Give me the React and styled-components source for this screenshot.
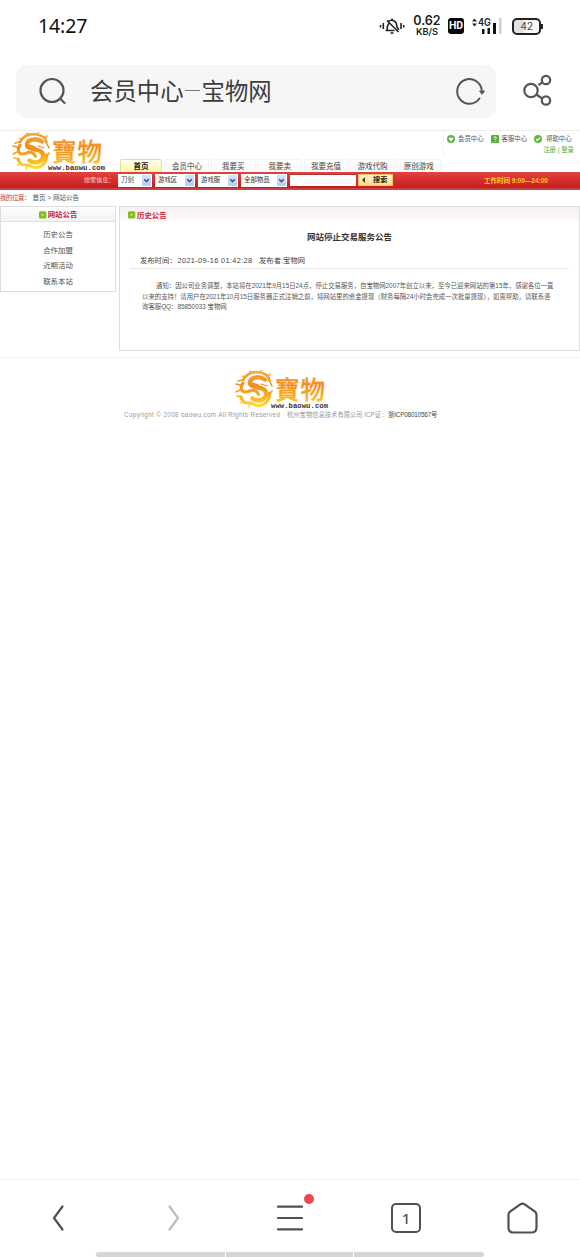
import React from 'react';
import styled, { createGlobalStyle } from 'styled-components';

const Global = createGlobalStyle`
  * { box-sizing: border-box; }
  html, body { margin: 0; background: #fff; }
  body { font-family: "Liberation Sans", "Noto Sans CJK SC", sans-serif; color: #444; }
  ul { list-style: none; margin: 0; padding: 0; }
  h1, h2, p { margin: 0; }
  svg { display: block; flex: none; overflow: visible; }
`;

const Screen = styled.div`
  width: 580px;
  height: 1257px;
  display: flex;
  flex-direction: column;
  overflow: hidden;
  background: #fff;
`;

/* ---------- phone status bar ---------- */
const StatusBar = styled.header`
  height: 65px;
  flex: none;
  display: flex;
  align-items: flex-start;
  padding: 14px 39px 0 38px;
`;
const Clock = styled.time`
  font: 19.5px/24px "Noto Sans", sans-serif;
  letter-spacing: -0.1px;
  color: #111;
  flex: 1;
`;
const BellIcon = styled.svg`
  margin-top: 3px;
`;
const SignalIcon = styled.svg`
  margin-top: 3px;
`;
const Speed = styled.div`
  width: 28px;
  margin: 1px 7px 0 8px;
  text-align: center;
  font-family: Inter, sans-serif;
  font-weight: 600;
  font-size: 12.5px;
  line-height: 12px;
  color: #222;
  small { display: block; font-size: 9.3px; line-height: 9px; letter-spacing: -0.1px; }
`;
const HdBadge = styled.div`
  width: 16px;
  height: 16px;
  margin: 4px 8px 0 0;
  border-radius: 3px;
  background: #050505;
  color: #fff;
  font: 700 10.5px/16px Roboto, sans-serif;
  text-align: center;
`;
const Battery = styled.div`
  position: relative;
  width: 29px;
  height: 17px;
  margin: 4px 0 0 10px;
  border: 2px solid #222;
  border-radius: 5px;
  background: linear-gradient(90deg, #e2e2e2 42%, #fafafa 42%);
  font: 10.5px/13px Inter, sans-serif;
  letter-spacing: -0.3px;
  text-align: center;
  color: #444;
  &::after {
    content: "";
    position: absolute;
    right: -4px;
    top: 4px;
    width: 2px;
    height: 5px;
    background: #222;
  }
`;

/* ---------- address bar ---------- */
const AddressRow = styled.div`
  height: 65px;
  flex: none;
  display: flex;
  align-items: flex-start;
  padding-left: 16px;
`;
const AddressBox = styled.div`
  width: 480px;
  height: 53px;
  border-radius: 10px;
  background: #f6f6f6;
  display: flex;
  align-items: center;
  padding: 0 11px 0 23px;
`;
const AddressTitle = styled.h1`
  flex: 1;
  margin: -3px 0 0 22px;
  display: flex;
  align-items: center;
  font: 400 23.4px/50px "Noto Sans CJK SC", sans-serif;
  color: #3d3d3d;
  i { width: 15px; height: 1px; margin: 1px 2px 0 1px; background: #777; }
`;
const ShareButton = styled.div`
  margin: 10px 0 0 27px;
`;

/* ---------- web page ---------- */
const Page = styled.main`
  flex: 1;
  min-height: 0;
`;
const SiteHeader = styled.div`
  height: 42px;
  border-top: 1px solid #eee;
  display: flex;
`;
const LogoSlot = styled.div`
  width: 119px;
  padding: 1px 0 0 11px;
`;
const HeaderMain = styled.div`
  flex: 1;
  display: flex;
  flex-direction: column;
  justify-content: space-between;
`;
const Account = styled.div`
  align-self: flex-end;
  width: 137px;
  padding: 3px 0 0 3px;
  border-left: 1px solid #f4f4f4;
`;
const QuickLinks = styled.div`
  display: flex;
  height: 10px;
  align-items: center;
`;
const QuickLink = styled.span`
  display: flex;
  align-items: center;
  gap: ${p => p.$gap}px;
  width: ${p => p.$w}px;
  font-size: 6.4px;
  line-height: 10px;
  white-space: nowrap;
  color: #555;
`;
const Login = styled.div`
  padding-right: 6px;
  text-align: right;
  font-size: 6.4px;
  line-height: 12px;
  color: #55ad32;
`;
const Tabs = styled.nav`
  display: flex;
  align-items: flex-end;
  gap: 1.4px;
  padding-left: 1px;
`;
const Tab = styled.span`
  width: ${p => (p.$active ? 42 : 45)}px;
  height: ${p => (p.$active ? 13 : 13)}px;
  margin-right: ${p => (p.$active ? 1 : 0)}px;
  border: 1px solid ${p => (p.$active ? '#dfdf96' : '#f3f3f3')};
  border-bottom: 0;
  border-radius: 2px 2px 0 0;
  background: ${p => (p.$active ? 'linear-gradient(#fffff0, #fff7a4)' : 'linear-gradient(#fff, #f8f8f8)')};
  font-size: 7.5px;
  line-height: 13px;
  font-weight: ${p => (p.$active ? 700 : 400)};
  color: ${p => (p.$active ? '#222' : '#444')};
  text-align: center;
  white-space: nowrap;
`;
const SearchBar = styled.div`
  height: 18px;
  display: flex;
  align-items: flex-start;
  padding-top: 2px;
  border-bottom: 2px solid #c44545;
  background: linear-gradient(#e34343, #c91b1b);
`;
const SearchLabel = styled.span`
  width: 118px;
  padding-left: 84px;
  font-size: 6.1px;
  line-height: 12px;
  color: #ffd2c8;
  white-space: nowrap;
`;
const Select = styled.span`
  width: ${p => p.$w}px;
  height: 13px;
  margin-right: 3px;
  padding: 1px 1px 1px 3px;
  display: flex;
  justify-content: space-between;
  background: #fff;
  font-size: 6.4px;
  line-height: 10px;
  color: #333;
  white-space: nowrap;
  svg { background: linear-gradient(#d5e4fd, #b5cef5); }
`;
const Input = styled.span`
  width: 66px;
  height: 12px;
  background: #fff;
  border-top: 1px solid #a33;
`;
const SearchButton = styled.span`
  width: 35px;
  height: 12px;
  margin-left: 2px;
  display: flex;
  align-items: center;
  gap: 8px;
  padding-left: 3px;
  border: 1px solid #f4c46a;
  background: linear-gradient(#fff7d2, #ffdc83);
  font-size: 7.2px;
  line-height: 10px;
  font-weight: 700;
  color: #331d0d;
  white-space: nowrap;
`;
const Hours = styled.span`
  margin-left: 91px;
  font: 700 6.5px/14px "Liberation Sans", "Noto Sans CJK SC", sans-serif;
  color: #ffd21f;
  white-space: nowrap;
`;
const Breadcrumb = styled.div`
  height: 16px;
  font-size: 6.5px;
  line-height: 16px;
  color: #555;
  white-space: pre;
  em { font-style: normal; color: #c43b3b; display: inline-block; width: 32.5px; letter-spacing: -0.5px; }
`;
const Columns = styled.div`
  display: flex;
  align-items: flex-start;
  gap: 3px;
`;
const Sidebar = styled.aside`
  width: 116px;
  height: 86px;
  border: 1px solid #ddd;
`;
const PanelHead = styled.h2`
  height: 15px;
  display: flex;
  align-items: center;
  justify-content: ${p => (p.$centered ? 'center' : 'flex-start')};
  gap: 2px;
  padding-left: ${p => (p.$centered ? 0 : 8)}px;
  padding-top: 2px;
  border-bottom: ${p => (p.$centered ? '1px solid #e4e4c9' : '0')};
  background: ${p => (p.$centered ? 'linear-gradient(#fff, #f2f2f7)' : 'linear-gradient(#f5eff1, #fffcfc)')};
  font-size: 7.4px;
  line-height: 12px;
  color: #d12335;
`;
const SideList = styled.ul`
  padding-top: 5px;
  li { height: 15.6px; font-size: 7.4px; line-height: 15.6px; text-align: center; color: #505050; }
`;
const Article = styled.section`
  width: 461px;
  height: 145px;
  border: 1px solid #ddd;
`;
const ArticleTitle = styled.h2`
  margin-top: 9px;
  text-align: center;
  font-size: 8.5px;
  line-height: 12px;
  color: #333;
`;
const Meta = styled.p`
  height: 15px;
  margin: 11px 10px 0;
  padding-left: 10px;
  display: flex;
  border-bottom: 1px solid #e8e8e8;
  font-size: 7.3px;
  line-height: 13px;
  color: #444;
  white-space: nowrap;
`;
const MetaPart = styled.span`
  width: ${p => p.$w}px;
  letter-spacing: ${p => p.$track || 0}px;
`;
const Body = styled.div`
  padding: 12px 0 0 22px;
`;
const Line = styled.p`
  padding-left: ${p => p.$indent || 0}px;
  font-size: 6.38px;
  line-height: 10.6px;
  color: #555;
  white-space: nowrap;
`;
const Footer = styled.footer`
  margin-top: 6px;
  border-top: 1px solid #f1f1f1;
  padding-top: 12px;
`;
const FooterLogo = styled.div`
  padding-left: 234px;
`;
const Copyright = styled.p`
  display: flex;
  padding: 0 0 0 124px;
  font-size: 6.3px;
  line-height: 12px;
  white-space: nowrap;
`;
const CopyPart = styled.span`
  width: ${p => p.$w}px;
  letter-spacing: ${p => p.$track || 0}px;
  color: ${p => (p.$dark ? '#444' : '#999')};
`;

/* ---------- browser toolbar ---------- */
const Toolbar = styled.nav`
  height: 73px;
  flex: none;
  border-top: 1px solid #f1f1f1;
  display: grid;
  grid-template-columns: repeat(5, 116px);
`;
const ToolItem = styled.span`
  position: relative;
  height: 76px;
  display: flex;
  align-items: center;
  justify-content: center;
`;
const Dot = styled.i`
  position: absolute;
  left: 72px;
  top: 14px;
  width: 10px;
  height: 10px;
  border-radius: 50%;
  background: #ed4850;
`;
const TabCount = styled.span`
  width: 30px;
  height: 30px;
  border: 2px solid #505050;
  border-radius: 5px;
  text-align: center;
  font: 500 15px/26px "Noto Sans", sans-serif;
  color: #505050;
`;
const HomeIndicator = styled.div`
  height: 5px;
  flex: none;
  margin: 0 96px;
  display: grid;
  grid-template-columns: 129px 127px 130px;
  gap: 1px;
  i { background: #d5d5d5; }
  i:first-child { border-radius: 3px 0 0 3px; }
  i:last-child { border-radius: 0 3px 3px 0; }
`;

function Logo({ id }) {
  const fill = `url(#${id})`;
  return (
    <svg width="95" height="39" viewBox="0 0 95 39">
      <defs>
        <linearGradient id={id} x1="0" y1="0" x2="0" y2="39" gradientUnits="userSpaceOnUse">
          <stop offset="0" stopColor="#f3ae42" />
          <stop offset="0.4" stopColor="#f28d1b" />
          <stop offset="0.75" stopColor="#fbbb20" />
          <stop offset="1" stopColor="#ffe84a" />
        </linearGradient>
      </defs>
      <g fill="none" stroke={fill} strokeLinecap="round" strokeLinejoin="round">
        <path strokeWidth="2.600" d="M9 10C13 3 20 1.500 26 2.500c6 1 9 4 9.500 8" />
        <path strokeWidth="4.400" d="M31 9.500C25 5.500 16 7.500 16 12.500c0 5 7 4 12 6 5.500 2 5.500 8.500.5 11-3.500 1.700-8 1-10-1" />
        <path strokeWidth="3" d="M9 13c-3 4-2 8.500 2 9 4 .3 5-2.500 9-1.500 3 .8 4 2.500 4.500 4" />
        <path strokeWidth="3" d="M7 27c1 4 4 6.500 8 6 4-.5 6 3.500 11 2.500 6-1 10-6 9.500-12.500" />
        <path strokeWidth="1.600" d="M9 10l-5 1M6 15l-4-1M6 20l-4 2M8 27l-5-1M10 31l-3 2M16 34l-1 3M34 6l2-2M36 12l2 4M36 24l2-3M18 13l6 2" />
        <path strokeWidth="1.200" d="M15 4l1-3 3 1M25 2l3-1.500M12 7l-4-1M27 14l6 2" />
      </g>
      <text x="41" y="28.500" fontFamily='"Noto Sans CJK TC", sans-serif' fontWeight="500" fontSize="24.500" textLength="50" fill={fill} stroke={fill} strokeWidth="0.300">寶物</text>
      <text x="37" y="37.600" fontFamily='"Liberation Mono", monospace' fontWeight="700" fontSize="7.200" textLength="57" fill="#3d3022">www.baowu.com</text>
    </svg>
  );
}

function GreenMark({ shape }) {
  return (
    <svg width="8" height="8" viewBox="0 0 8 8">
      {shape === 'help' ? <rect width="8" height="8" rx="1" fill="#5cae3c" /> : <circle cx="4" cy="4" r="4" fill="#62b445" />}
      {shape === 'heart' && <path d="M4 6.400L1.800 4C1.300 2.800 3 1.800 4 3c1-1.200 2.700-.2 2.200 1z" fill="#fff" />}
      {shape === 'help' && <path d="M2.700 2.800C3 1.400 5.500 1.600 5.300 3 5.200 3.800 4 3.800 4 5M4 6v.8" fill="none" stroke="#fff" strokeWidth="1" />}
      {shape === 'check' && <path d="M2 4l1.500 1.500L6.200 2.700" fill="none" stroke="#fff" strokeWidth="1.200" />}
    </svg>
  );
}

const Bullet = () => (
  <svg width="7" height="7" viewBox="0 0 7 7">
    <rect y="-0.700" width="7.300" height="7.300" rx="1.300" fill="#7fc21c" />
    <path d="M2 2.200h3L3.500 4.200z" fill="#d3ec85" />
  </svg>
);

const DropArrow = () => (
  <svg width="9" height="11" viewBox="0 0 9 11">
    <path d="M2.200 4.300l2.300 2.300 2.300-2.300" fill="none" stroke="#3f5a88" strokeWidth="1.500" />
  </svg>
);

const tabs = ['首页', '会员中心', '我要买', '我要卖', '我要充值', '游戏代购', '原创游戏'];
const selects = [['刀剑', 34], ['游戏区', 40], ['游戏服', 40], ['全部物品', 46]];
const sideLinks = ['历史公告', '合作加盟', '近期活动', '联系本站'];

export default function App() {
  return (
    <Screen>
      <Global />
      <StatusBar>
        <Clock>14:27</Clock>
        <BellIcon width="26" height="18" viewBox="0 0 26 18" fill="none" stroke="#222" strokeWidth="1.600">
          <path d="M6.500 13.500h9M8.300 13V9.500L10 6M9.500 4.300C11 3.300 13.500 3 15.500 4.200c2 1.300 2.300 3 2.300 5.300l2 3.500M13 1.500v2M11.500 16h3M8 3.500l11.500 11.500" />
          <path d="M4.300 6v6M1.500 8v2.500M22 6v6M24.700 8v2.500" />
        </BellIcon>
        <Speed>0.62<small>KB/S</small></Speed>
        <HdBadge>HD</HdBadge>
        <SignalIcon width="30" height="18" viewBox="0 0 30 18">
          <path d="M0 4.500l2.500-3L5 4.500zM0 6.500l2.500 3L5 6.500z" fill="#222" />
          <text x="6" y="9" fontFamily="Inter, sans-serif" fontWeight="600" fontSize="10" textLength="13" lengthAdjust="spacingAndGlyphs" fill="#222">4G</text>
          <path d="M10 12h2.500v5H10zM15.500 11H18v6h-2.500zM21 6h3v11h-3z" fill="#111" />
          <path d="M27 1h2.500v16H27z" fill="#d0d0d0" />
        </SignalIcon>
        <Battery>42</Battery>
      </StatusBar>

      <AddressRow>
        <AddressBox>
          <svg width="29" height="28" viewBox="0 0 29 28" fill="none" stroke="#555" strokeWidth="2.200" strokeLinecap="round">
            <circle cx="13" cy="12.500" r="11.500" /><path d="M21.500 21l4 4" />
          </svg>
          <AddressTitle>会员中心<i />宝物网</AddressTitle>
          <svg width="30" height="28" viewBox="0 0 30 28" fill="none" stroke="#555" strokeWidth="2" strokeLinecap="round">
            <path d="M24.500 20.500A12.300 12.300 0 1 1 26.700 12" />
            <path d="M25 13h4.500L27.200 16z" fill="#555" strokeWidth="1" />
          </svg>
        </AddressBox>
        <ShareButton>
          <svg width="30" height="32" viewBox="0 0 30 32" fill="none" stroke="#555" strokeWidth="2.200">
            <circle cx="8" cy="15.500" r="6.700" /><circle cx="23" cy="5" r="4.200" /><circle cx="23" cy="25.500" r="4.200" />
            <path d="M15.500 10l4-2.700M13.300 19.500l6 4" />
          </svg>
        </ShareButton>
      </AddressRow>

      <Page>
        <SiteHeader>
          <LogoSlot><Logo id="headerGold" /></LogoSlot>
          <HeaderMain>
            <Account>
              <QuickLinks>
                <QuickLink $w={43.500} $gap={3}><GreenMark shape="heart" />会员中心</QuickLink>
                <QuickLink $w={43} $gap={3}><GreenMark shape="help" />客服中心</QuickLink>
                <QuickLink $w={40} $gap={4.500}><GreenMark shape="check" />帮助中心</QuickLink>
              </QuickLinks>
              <Login>注册 | 登录</Login>
            </Account>
            <Tabs>{tabs.map((t, i) => <Tab key={t} $active={i === 0}>{t}</Tab>)}</Tabs>
          </HeaderMain>
        </SiteHeader>

        <SearchBar>
          <SearchLabel>搜索信息：</SearchLabel>
          {selects.map(([t, w]) => <Select key={t} $w={w}>{t}<DropArrow /></Select>)}
          <Input />
          <SearchButton>
            <svg width="3" height="6" viewBox="0 0 3 6"><path d="M3 0v6L0 3z" fill="#58340c" /></svg>
            搜索
          </SearchButton>
          <Hours>工作时间 9:00—24:00</Hours>
        </SearchBar>

        <Breadcrumb><em>我的位置：</em>首页 &gt; 网站公告</Breadcrumb>

        <Columns>
          <Sidebar>
            <PanelHead $centered><Bullet />网站公告</PanelHead>
            <SideList>{sideLinks.map(t => <li key={t}>{t}</li>)}</SideList>
          </Sidebar>
          <Article>
            <PanelHead><Bullet />历史公告</PanelHead>
            <ArticleTitle>网站停止交易服务公告</ArticleTitle>
            <Meta>
              <MetaPart $w={37.500}>发布时间：</MetaPart>
              <MetaPart $w={81.500} $track={0.380}>2021-09-16 01:42:28</MetaPart>
              <MetaPart $w={50} $track={0.040}>发布者:宝物网</MetaPart>
            </Meta>
            <Body>
              <Line $indent={14}>通知：因公司业务调整，本站将在2021年9月15日24点，停止交易服务，自宝物网2007年创立以来，至今已迎来网站的第15年，感谢各位一直</Line>
              <Line>以来的支持！请用户在2021年10月15日服务器正式注销之前，将网站里的资金提现（财务每隔24小时会完成一次批量提现），如需帮助，请联系咨</Line>
              <Line>询客服QQ：85850033 宝物网</Line>
            </Body>
          </Article>
        </Columns>

        <Footer>
          <FooterLogo><Logo id="footerGold" /></FooterLogo>
          <Copyright>
            <CopyPart $w={163} $track={0.360}>Copyright © 2008 baowu.com All Rights Reserved</CopyPart>
            <CopyPart $w={101}>杭州宝物信息技术有限公司 ICP证：</CopyPart>
            <CopyPart $w={50} $track={-0.150} $dark>浙ICP08010567号</CopyPart>
          </Copyright>
        </Footer>
      </Page>

      <Toolbar>
        <ToolItem>
          <svg width="12" height="26" viewBox="0 0 12 26" fill="none" stroke="#505050" strokeWidth="2.200" strokeLinecap="round" strokeLinejoin="round"><path d="M10.500 1.500L2 13l8.500 11.500" /></svg>
        </ToolItem>
        <ToolItem>
          <svg width="12" height="26" viewBox="0 0 12 26" fill="none" stroke="#bdbdbd" strokeWidth="2.200" strokeLinecap="round" strokeLinejoin="round"><path d="M1.500 1.500L10 13 1.500 24.500" /></svg>
        </ToolItem>
        <ToolItem>
          <svg width="26" height="26" viewBox="0 0 26 26" fill="none" stroke="#505050" strokeWidth="2.200" strokeLinecap="round"><path d="M1 1.700h24M1 13h24M1 24.300h24" /></svg>
          <Dot />
        </ToolItem>
        <ToolItem><TabCount>1</TabCount></ToolItem>
        <ToolItem>
          <svg width="31" height="32" viewBox="0 0 31 32" fill="none" stroke="#505050" strokeWidth="2.200" strokeLinejoin="round">
            <path d="M13.300 2.300Q15.500.8 17.700 2.300L28 9.600Q29.500 10.800 29.500 13V25.500Q29.500 30.500 24.500 30.500H6.500Q1.500 30.500 1.500 25.500V13Q1.500 10.800 3 9.600Z" />
          </svg>
        </ToolItem>
      </Toolbar>
      <HomeIndicator><i /><i /><i /></HomeIndicator>
    </Screen>
  );
}
